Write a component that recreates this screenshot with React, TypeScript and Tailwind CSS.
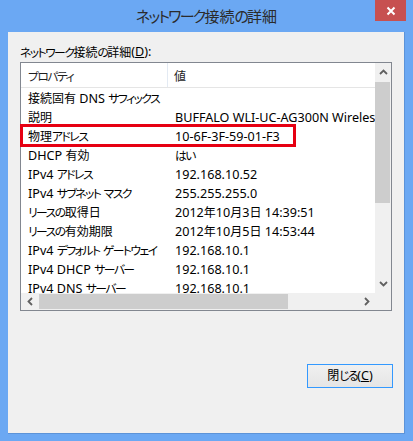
const font = "font-['Noto_Sans','Noto_Sans_CJK_JP',sans-serif] [font-feature-settings:'palt']";

const rows = [
  { name: '接続固有 DNS サフィックス', value: '' },
  { name: '説明', value: 'BUFFALO WLI-UC-AG300N Wireless LAN Adapter' },
  { name: '物理アドレス', value: '10-6F-3F-59-01-F3' },
  { name: 'DHCP 有効', value: 'はい' },
  { name: 'IPv4 アドレス', value: '192.168.10.52' },
  { name: 'IPv4 サブネット マスク', value: '255.255.255.0' },
  { name: 'リースの取得日', value: '2012年10月3日 14:39:51' },
  { name: 'リースの有効期限', value: '2012年10月5日 14:53:44' },
  { name: 'IPv4 デフォルト ゲートウェイ', value: '192.168.10.1' },
  { name: 'IPv4 DHCP サーバー', value: '192.168.10.1' },
  { name: 'IPv4 DNS サーバー', value: '192.168.10.1' },
];

// Meiryo UI has narrow kana and wider latin than Noto; split runs to get closer
function J({
  text,
  kana = 'text-[11.8px] tracking-[-1.5px]',
  kanji = 'text-[12px]',
}: {
  text: string;
  kana?: string;
  kanji?: string;
}) {
  const parts = text.split(/([\u3040-\u30ff]+|[\u4e00-\u9fff]+)/).filter(Boolean);
  return (
    <>
      {parts.map((p, i) =>
        /^[\u3040-\u30ff]/.test(p) ? (
          <span key={i} className={kana}>{p}</span>
        ) : /^[\u4e00-\u9fff]/.test(p) ? (
          <span key={i} className={kanji}>{p}</span>
        ) : (
          <span key={i}>{p}</span>
        )
      )}
    </>
  );
}

function Chevron({ dir }: { dir: 'up' | 'down' | 'left' | 'right' }) {
  const d = {
    up: 'M1 6 L4.5 2.5 L8 6',
    down: 'M1 3 L4.5 6.5 L8 3',
    left: 'M6 1 L2.5 4.5 L6 8',
    right: 'M3 1 L6.5 4.5 L3 8',
  }[dir];
  return (
    <svg width="9" height="9" viewBox="0 0 9 9">
      <path d={d} fill="none" stroke="#606060" strokeWidth="1.8" />
    </svg>
  );
}

export default function App() {
  return (
    <div className={`w-[413px] h-[441px] bg-[#6ba8f3] flex flex-col ${font}`}>
      {/* Title bar */}
      <div className="h-[32px] flex items-start">
        <div className="flex-1 h-full flex items-center justify-center pl-[38px] pt-[1px] text-[15px] text-[#2b2b2b]">
          <J text="ネットワーク接続の詳細" kana="tracking-[-1.8px]" kanji="" />
        </div>
        <div className="w-[31px] h-[21px] mr-[7px] bg-[#c75050] flex items-center justify-center">
          <svg width="10" height="10" viewBox="0 0 10 10">
            <path d="M1.5 1.5 L8.5 8.5 M8.5 1.5 L1.5 8.5" stroke="#fff" strokeWidth="2" />
          </svg>
        </div>
      </div>

      {/* Client area */}
      <div className="mx-[8px] mb-[7px] flex-1 bg-[#f0f0f0] border-r border-b border-[#5c93d8] flex flex-col pl-[12px] pr-[11px]">
        <div className="h-[30px] flex items-end pb-[3px] text-[12.6px] leading-none text-black">
          <J text="ネットワーク接続の詳細" />(<span className="underline">D</span>):
        </div>

        {/* List view */}
        <div className="relative w-[372px] h-[249px] border border-[#828790] bg-white flex flex-col">
          <div className="flex-1 flex min-h-0">
            <div className="w-[354px] flex flex-col overflow-hidden text-[12.6px] text-black">
              <div className="h-[25px] shrink-0 flex border-b border-[#e5e5e5]">
                <div className="w-[147px] border-r border-[#e3eaf3] pl-[7px] pt-[3px] flex items-center text-[#1e1e1e]">
                  <J text="プロパティ" />
                </div>
                <div className="flex-1 pl-[6px] pt-[3px] flex items-center text-[#1e1e1e]">
                  <J text="値" />
                </div>
              </div>
              {rows.map((r) => (
                <div key={r.name} className="h-[19px] shrink-0 flex items-center pt-[4px] whitespace-nowrap">
                  <div className="w-[147px] shrink-0 pl-[7px]">
                    <J text={r.name} />
                  </div>
                  <div className="pl-[7px]">
                    <J text={r.value} />
                  </div>
                </div>
              ))}
            </div>
            {/* Vertical scrollbar */}
            <div className="w-[16px] bg-[#f0f0f0] flex flex-col">
              <div className="h-[19px] flex items-center justify-center">
                <Chevron dir="up" />
              </div>
              <div className="h-[121px] w-[15px] bg-[#cdcdcd]" />
              <div className="flex-1" />
              <div className="h-[19px] flex items-center justify-center">
                <Chevron dir="down" />
              </div>
            </div>
          </div>
          {/* Horizontal scrollbar */}
          <div className="h-[17px] bg-[#f0f0f0] flex items-center">
            <div className="w-[18px] flex justify-center">
              <Chevron dir="left" />
            </div>
            <div className="w-[249px] h-[15px] bg-[#cdcdcd]" />
            <div className="flex-1" />
            <div className="w-[18px] flex justify-center mr-[16px]">
              <Chevron dir="right" />
            </div>
          </div>

          {/* Highlight box */}
          <div className="absolute left-[-1px] top-[61px] w-[276px] h-[23px] border-[3px] border-[#e60012]" />
        </div>

        <div className="flex-1 flex justify-end pt-[53px]">
          <button className="w-[86px] h-[24px] border border-[#3399ff] bg-gradient-to-b from-[#f0f0f0] to-[#e5e5e5] text-[12.6px] text-black flex items-center justify-center">
            <J text="閉じる" />(<span className="underline">C</span>)
          </button>
        </div>
      </div>
    </div>
  );
}
